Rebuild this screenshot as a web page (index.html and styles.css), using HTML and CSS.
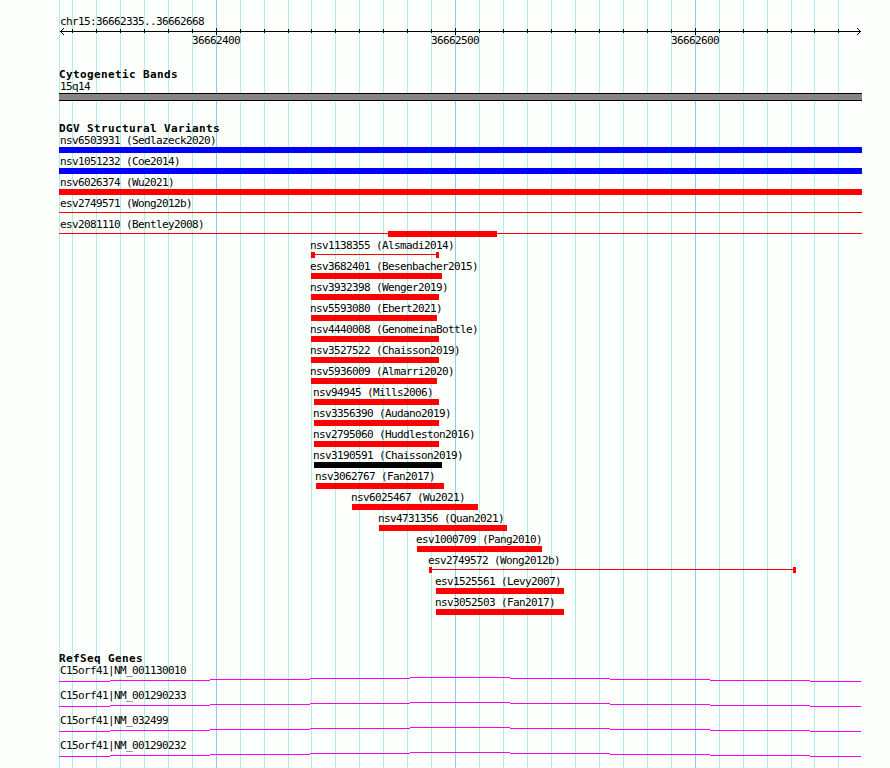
FILE: index.html
```html
<!DOCTYPE html>
<html lang="en">
<head>
<meta charset="utf-8">
<title>chr15:36662335..36662668</title>
<link rel="stylesheet" href="styles.css">
</head>
<body>
<main class="browser">
  <svg class="gridlines" width="803" height="768" shape-rendering="crispEdges" aria-hidden="true">
    <path class="minor" d="M.5 0v768M13.5 0v768M37.5 0v768M61.5 0v768M85.5 0v768M109.5 0v768M133.5 0v768M181.5 0v768M205.5 0v768M229.5 0v768M252.5 0v768M276.5 0v768M300.5 0v768M324.5 0v768M348.5 0v768M372.5 0v768M420.5 0v768M444.5 0v768M468.5 0v768M492.5 0v768M516.5 0v768M540.5 0v768M564.5 0v768M588.5 0v768M612.5 0v768M660.5 0v768M684.5 0v768M708.5 0v768M732.5 0v768M755.5 0v768M779.5 0v768"/>
    <path class="major" d="M157.5 0v768M396.5 0v768M636.5 0v768"/>
  </svg>

  <header class="ruler">
    <div class="label">chr15:36662335..36662668</div>
    <svg class="axis" width="803" height="8" shape-rendering="crispEdges" aria-hidden="true">
      <path d="M1 3.5H802"/>
      <path d="M13.5 1v4M37.5 1v4M61.5 1v4M85.5 1v4M109.5 1v4M133.5 1v4M181.5 1v4M205.5 1v4M229.5 1v4M252.5 1v4M276.5 1v4M300.5 1v4M324.5 1v4M348.5 1v4M372.5 1v4M420.5 1v4M444.5 1v4M468.5 1v4M492.5 1v4M516.5 1v4M540.5 1v4M564.5 1v4M588.5 1v4M612.5 1v4M660.5 1v4M684.5 1v4M708.5 1v4M732.5 1v4M755.5 1v4M779.5 1v4"/>
      <path d="M157.5 0v7M396.5 0v7M636.5 0v7"/>
      <path d="M2 2.5h1M3 1.5h1M4 .5h1M2 4.5h1M3 5.5h1M4 6.5h1M800 2.5h1M799 1.5h1M798 .5h1M800 4.5h1M799 5.5h1M798 6.5h1"/>
    </svg>
    <div class="numbers"><span>36662400</span><span>36662500</span><span>36662600</span></div>
  </header>

  <section class="cyto">
    <h2>Cytogenetic Bands</h2>
    <div class="label">15q14</div>
    <div class="band"></div>
  </section>

  <section class="variants">
    <h2>DGV Structural Variants</h2>
    <div class="row full"><span class="label">nsv6503931 (Sedlazeck2020)</span><i class="bar gain"></i></div>
    <div class="row full"><span class="label">nsv1051232 (Coe2014)</span><i class="bar gain"></i></div>
    <div class="row full"><span class="label">nsv6026374 (Wu2021)</span><i class="bar"></i></div>
    <div class="row full"><span class="label">esv2749571 (Wong2012b)</span><i class="bar line"></i></div>
    <div class="row full"><span class="label">esv2081110 (Bentley2008)</span><i class="bar line"><b class="core"></b></i></div>
    <div class="row" style="--start:252px;--len:128px"><span class="label">nsv1138355 (Alsmadi2014)</span><i class="bar line"><b class="cap wide"></b><b class="cap"></b></i></div>
    <div class="row" style="--start:252px;--len:131px"><span class="label">esv3682401 (Besenbacher2015)</span><i class="bar"></i></div>
    <div class="row" style="--start:252px;--len:128px"><span class="label">nsv3932398 (Wenger2019)</span><i class="bar"></i></div>
    <div class="row" style="--start:252px;--len:126px"><span class="label">nsv5593080 (Ebert2021)</span><i class="bar"></i></div>
    <div class="row" style="--start:252px;--len:128px"><span class="label">nsv4440008 (GenomeinaBottle)</span><i class="bar"></i></div>
    <div class="row" style="--start:252px;--len:128px"><span class="label">nsv3527522 (Chaisson2019)</span><i class="bar"></i></div>
    <div class="row" style="--start:252px;--len:126px"><span class="label">nsv5936009 (Almarri2020)</span><i class="bar"></i></div>
    <div class="row" style="--start:255px;--len:125px"><span class="label">nsv94945 (Mills2006)</span><i class="bar"></i></div>
    <div class="row" style="--start:255px;--len:125px"><span class="label">nsv3356390 (Audano2019)</span><i class="bar"></i></div>
    <div class="row" style="--start:255px;--len:125px"><span class="label">nsv2795060 (Huddleston2016)</span><i class="bar"></i></div>
    <div class="row" style="--start:255px;--len:128px"><span class="label">nsv3190591 (Chaisson2019)</span><i class="bar other"></i></div>
    <div class="row" style="--start:257px;--len:128px"><span class="label">nsv3062767 (Fan2017)</span><i class="bar"></i></div>
    <div class="row" style="--start:293px;--len:126px"><span class="label">nsv6025467 (Wu2021)</span><i class="bar"></i></div>
    <div class="row" style="--start:320px;--len:128px"><span class="label">nsv4731356 (Quan2021)</span><i class="bar"></i></div>
    <div class="row" style="--start:358px;--len:125px"><span class="label">esv1000709 (Pang2010)</span><i class="bar"></i></div>
    <div class="row" style="--start:370px;--len:367px"><span class="label">esv2749572 (Wong2012b)</span><i class="bar line"><b class="cap"></b><b class="cap"></b></i></div>
    <div class="row" style="--start:377px;--len:128px"><span class="label">esv1525561 (Levy2007)</span><i class="bar"></i></div>
    <div class="row" style="--start:377px;--len:128px"><span class="label">nsv3052503 (Fan2017)</span><i class="bar"></i></div>
  </section>

  <section class="genes">
    <h2>RefSeq Genes</h2>
    <svg width="0" height="0" class="defs" aria-hidden="true">
      <defs><path id="intron" d="M0 4.5h51M51 3.5h100M151 2.5h100M251 1.5h100M351 .5h100M451 1.5h100M551 2.5h100M651 3.5h100M751 4.5h51"/></defs>
    </svg>
    <div class="gene"><span class="label">C15orf41|NM_001130010</span><svg width="803" height="5" shape-rendering="crispEdges"><use href="#intron"/></svg></div>
    <div class="gene"><span class="label">C15orf41|NM_001290233</span><svg width="803" height="5" shape-rendering="crispEdges"><use href="#intron"/></svg></div>
    <div class="gene"><span class="label">C15orf41|NM_032499</span><svg width="803" height="5" shape-rendering="crispEdges"><use href="#intron"/></svg></div>
    <div class="gene"><span class="label">C15orf41|NM_001290232</span><svg width="803" height="5" shape-rendering="crispEdges"><use href="#intron"/></svg></div>
  </section>
</main>
</body>
</html>
```
FILE: styles.css
```css
* { box-sizing: border-box; }

body {
  margin: 0;
  background: #fdfffc;
  color: #000;
  font: 11px/16px "DejaVu Sans Mono", monospace;
  letter-spacing: -0.622px;
}

.browser {
  position: relative;
  width: 803px;
  height: 768px;
  margin-left: 59px;
  padding-top: 14px;
  overflow: hidden;
}

.gridlines {
  position: absolute;
  top: 0;
  left: 0;
  z-index: -1;
}
.minor { stroke: #afeeee; }
.major { stroke: #87ceeb; }

svg { display: block; }

h2 {
  margin: 0;
  height: 12px;
  font-size: 11px;
  line-height: 16px;
  letter-spacing: 0.378px;
}

.label {
  display: block;
  height: 14px;
  padding-left: 1px;
  white-space: nowrap;
}

/* Coordinate ruler */
.ruler { height: 53px; }
.axis { stroke: #000; }
.numbers {
  display: grid;
  grid-template-columns: 239px 240px auto;
  padding-left: 133px;
  margin-top: -3px;
}

/* Cytogenetic track */
.band {
  height: 8px;
  background: #878387;
  border: solid #000;
  border-width: 1px 0;
}
.cyto { height: 54px; }

/* Structural variants */
.variants { height: 530px; }
.row {
  height: 21px;
  margin-left: var(--start, 0);
}
.row .label {
  padding-left: 0;
  margin-left: -1px;
}
.row.full .label { margin-left: 1px; }
.bar {
  display: flex;
  justify-content: space-between;
  width: var(--len, 803px);
  height: 6px;
  background: #f00;
}
.gain { background: #00f; }
.other { background: #000; }
.line { background: linear-gradient(#f00, #f00) 0 2px / 100% 1px no-repeat; }
.cap {
  width: 3px;
  background: #f00;
}
.cap.wide { width: 4px; }
.core {
  width: 109px;
  margin-left: 329px;
  background: #f00;
}

/* Gene models */
.gene {
  height: 25px;
  stroke: #f0f;
}
.gene .label { stroke: none; }
```
